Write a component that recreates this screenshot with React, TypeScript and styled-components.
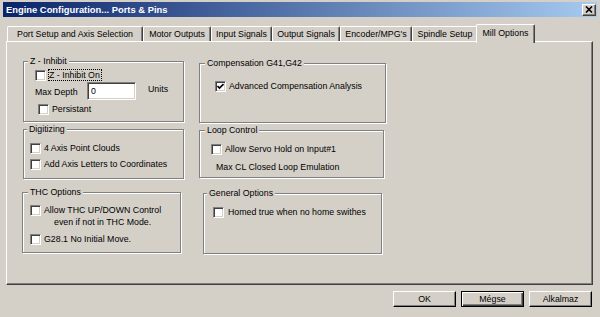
import React from 'react'
import styled, { createGlobalStyle } from 'styled-components'

const GlobalStyle = createGlobalStyle`
    html, body {
        margin: 0;
        padding: 0;
        background: #d4d0c8;
    }
    body {
        font-family: "Liberation Sans", Arial, sans-serif;
        font-size: 8.8px;
        color: #000;
    }
`

const Window = styled.div`
    width: 600px;
    height: 317px;
    box-sizing: border-box;
    padding: 2px 3px 3px 3px;
    display: flex;
    flex-direction: column;
    background: #d4d0c8;
    overflow: hidden;
`

const TitleBar = styled.div`
    height: 15px;
    display: flex;
    align-items: center;
    justify-content: space-between;
    padding-left: 3px;
    background: linear-gradient(to right, #0a246a, #a6caf0);
`

const TitleText = styled.span`
    color: #fff;
    font-weight: bold;
    font-size: 9.4px;
`

const CloseButton = styled.div`
    width: 14px;
    height: 12px;
    box-sizing: border-box;
    margin-right: 1px;
    background: #d4d0c8;
    border-top: 1px solid #fff;
    border-left: 1px solid #fff;
    border-right: 1px solid #404040;
    border-bottom: 1px solid #404040;
    box-shadow: inset -1px -1px 0 #808080;
    display: flex;
    align-items: center;
    justify-content: center;
`

const Content = styled.div`
    padding: 0 4px 0 3px;
    display: flex;
    flex-direction: column;
`

const TabStrip = styled.div`
    height: 17px;
    margin-top: 7px;
    padding-left: 1px;
    display: flex;
    align-items: flex-end;
`

const Tab = styled.div<{ $w: number; $active?: boolean }>`
    width: ${p => p.$w + (p.$active ? 4 : 0)}px;
    height: ${p => (p.$active ? 19 : 15)}px;
    margin: ${p => (p.$active ? '0 -2px -2px -2px' : '0')};
    box-sizing: border-box;
    display: flex;
    align-items: center;
    justify-content: center;
    padding-bottom: ${p => (p.$active ? 2 : 0)}px;
    background: #d4d0c8;
    border-top: 1px solid #fff;
    border-left: 1px solid #fff;
    border-right: 1px solid #404040;
    border-radius: 2px 2px 0 0;
    box-shadow: inset -1px 0 0 #808080;
    position: relative;
    z-index: ${p => (p.$active ? 2 : 1)};
    white-space: nowrap;
`

const Panel = styled.div`
    height: 244px;
    box-sizing: border-box;
    border-top: 1px solid #fff;
    border-left: 1px solid #fff;
    border-right: 1px solid #404040;
    border-bottom: 1px solid #404040;
    box-shadow: inset -1px -1px 0 #808080;
    display: flex;
`

const Column = styled.div<{ $w?: number }>`
    width: ${p => (p.$w ? `${p.$w}px` : 'auto')};
    display: flex;
    flex-direction: column;
`

const Group = styled.div<{ $w: number; $h: number; $top: number; $left: number }>`
    width: ${p => p.$w}px;
    height: ${p => p.$h}px;
    margin-top: ${p => p.$top}px;
    margin-left: ${p => p.$left}px;
    box-sizing: border-box;
    border: 1px solid #808080;
    box-shadow: inset 1px 1px 0 #fff, 1px 1px 0 #fff;
    display: flex;
    flex-direction: column;
    align-items: flex-start;
`

const Legend = styled.span<{ $x: number }>`
    margin: -6px 0 0 ${p => p.$x}px;
    padding: 0 2px;
    line-height: 11px;
    background: #d4d0c8;
    white-space: nowrap;
`

const Row = styled.div<{ $mt: number; $ml: number; $gap?: number; $top?: boolean }>`
    display: flex;
    align-items: ${p => (p.$top ? 'flex-start' : 'center')};
    gap: ${p => p.$gap ?? 3}px;
    margin: ${p => p.$mt}px 0 0 ${p => p.$ml}px;
    white-space: nowrap;
`

const Box = styled.span<{ $offset?: number }>`
    width: 11px;
    height: 11px;
    flex: none;
    margin-top: ${p => p.$offset ?? 0}px;
    box-sizing: border-box;
    background: #fff;
    border-top: 1px solid #808080;
    border-left: 1px solid #808080;
    border-right: 1px solid #fff;
    border-bottom: 1px solid #fff;
    box-shadow: inset 1px 1px 0 #404040, inset -1px -1px 0 #d4d0c8;
    display: flex;
    align-items: center;
    justify-content: center;
`

const Label = styled.span<{ $center?: boolean }>`
    line-height: ${p => (p.$center ? 12 : 11)}px;
    text-align: ${p => (p.$center ? 'center' : 'left')};
`

const FocusLabel = styled.span`
    line-height: 10px;
    padding: 0 1px 0 0;
    border: 1px dotted #000;
`

const PlainText = styled.div<{ $mt: number; $ml: number }>`
    margin: ${p => p.$mt}px 0 0 ${p => p.$ml}px;
    line-height: 12px;
    white-space: nowrap;
`

const FieldLabel = styled.span`
    width: 52px;
    padding-top: 5px;
    line-height: 11px;
`

const TextInput = styled.div`
    width: 49px;
    height: 18px;
    box-sizing: border-box;
    background: #fff;
    border-top: 1px solid #808080;
    border-left: 1px solid #808080;
    border-right: 1px solid #fff;
    border-bottom: 1px solid #fff;
    box-shadow: inset 1px 1px 0 #404040, inset -1px -1px 0 #d4d0c8;
    padding: 3px 0 0 3px;
    line-height: 11px;
`

const Units = styled.span`
    margin: 2px 0 0 12px;
    line-height: 11px;
`

const ButtonBar = styled.div`
    display: flex;
    justify-content: flex-end;
    gap: 5px;
    margin-top: 6px;
    padding-right: 1px;
`

const Button = styled.div<{ $default?: boolean }>`
    width: 63px;
    height: 16px;
    box-sizing: border-box;
    display: flex;
    align-items: center;
    justify-content: center;
    background: #d4d0c8;
    border-top: 1px solid ${p => (p.$default ? '#000' : '#fff')};
    border-left: 1px solid ${p => (p.$default ? '#000' : '#fff')};
    border-right: 1px solid #000;
    border-bottom: 1px solid #000;
    box-shadow: ${p =>
        p.$default
            ? 'inset 1px 1px 0 #fff, inset -1px -1px 0 #404040, inset -2px -2px 0 #808080'
            : 'inset -1px -1px 0 #808080'};
`

const Check = ({ checked, offset }: { checked?: boolean; offset?: number }) => (
    <Box $offset={offset}>
        {checked && (
            <svg width="7" height="7" viewBox="0 0 7 7">
                <path d="M0.5 3 L2.5 5 L6.5 1" fill="none" stroke="#000" strokeWidth="1.6" />
            </svg>
        )}
    </Box>
)

const tabs = [
    { label: 'Port Setup and Axis Selection', w: 136 },
    { label: 'Motor Outputs', w: 68 },
    { label: 'Input Signals', w: 61 },
    { label: 'Output Signals', w: 68 },
    { label: "Encoder/MPG's", w: 72 },
    { label: 'Spindle Setup', w: 66 },
    { label: 'Mill Options', w: 55, active: true },
]

const App = () => {
    return (
        <>
            <GlobalStyle />
            <Window>
                <TitleBar>
                    <TitleText>Engine Configuration... Ports &amp; Pins</TitleText>
                    <CloseButton>
                        <svg width="8" height="7" viewBox="0 0 8 7">
                            <path d="M1 0.5 L7 6.5 M7 0.5 L1 6.5" stroke="#000" strokeWidth="1.6" />
                        </svg>
                    </CloseButton>
                </TitleBar>
                <Content>
                    <TabStrip>
                        {tabs.map(t => (
                            <Tab key={t.label} $w={t.w} $active={t.active}>
                                {t.label}
                            </Tab>
                        ))}
                    </TabStrip>
                    <Panel>
                        <Column $w={180}>
                            <Group $w={161} $h={61} $top={19} $left={16}>
                                <Legend $x={4}>Z - Inhibit</Legend>
                                <Row $mt={2} $ml={11} $gap={2}>
                                    <Check />
                                    <FocusLabel>Z - Inhibit On</FocusLabel>
                                </Row>
                                <Row $mt={1} $ml={11} $gap={0} $top>
                                    <FieldLabel>Max Depth</FieldLabel>
                                    <TextInput>0</TextInput>
                                    <Units>Units</Units>
                                </Row>
                                <Row $mt={4} $ml={14}>
                                    <Check />
                                    <Label>Persistant</Label>
                                </Row>
                            </Group>
                            <Group $w={161} $h={50} $top={7} $left={16}>
                                <Legend $x={3}>Digitizing</Legend>
                                <Row $mt={8} $ml={6}>
                                    <Check />
                                    <Label>4 Axis Point Clouds</Label>
                                </Row>
                                <Row $mt={5} $ml={6}>
                                    <Check />
                                    <Label>Add Axis Letters to Coordinates</Label>
                                </Row>
                            </Group>
                            <Group $w={159} $h={61} $top={13} $left={15}>
                                <Legend $x={5}>THC Options</Legend>
                                <Row $mt={6} $ml={7} $top>
                                    <Check offset={1} />
                                    <Label $center>
                                        Allow THC UP/DOWN Control
                                        <br />
                                        even if not in THC Mode.
                                    </Label>
                                </Row>
                                <Row $mt={6} $ml={7}>
                                    <Check />
                                    <Label>G28.1 No Initial Move.</Label>
                                </Row>
                            </Group>
                        </Column>
                        <Column>
                            <Group $w={187} $h={60} $top={21} $left={12}>
                                <Legend $x={5}>Compensation G41,G42</Legend>
                                <Row $mt={12} $ml={15}>
                                    <Check checked />
                                    <Label>Advanced Compensation Analysis</Label>
                                </Row>
                            </Group>
                            <Group $w={185} $h={48} $top={7} $left={12}>
                                <Legend $x={5}>Loop Control</Legend>
                                <Row $mt={8} $ml={11}>
                                    <Check />
                                    <Label>Allow Servo Hold on Input#1</Label>
                                </Row>
                                <PlainText $mt={6} $ml={16}>
                                    Max CL Closed Loop Emulation
                                </PlainText>
                            </Group>
                            <Group $w={179} $h={61} $top={15} $left={16}>
                                <Legend $x={3}>General Options</Legend>
                                <Row $mt={8} $ml={9} $gap={4}>
                                    <Check />
                                    <Label>Homed true when no home swithes</Label>
                                </Row>
                            </Group>
                        </Column>
                    </Panel>
                    <ButtonBar>
                        <Button>OK</Button>
                        <Button $default>Mégse</Button>
                        <Button>Alkalmaz</Button>
                    </ButtonBar>
                </Content>
            </Window>
        </>
    )
}

export default App
